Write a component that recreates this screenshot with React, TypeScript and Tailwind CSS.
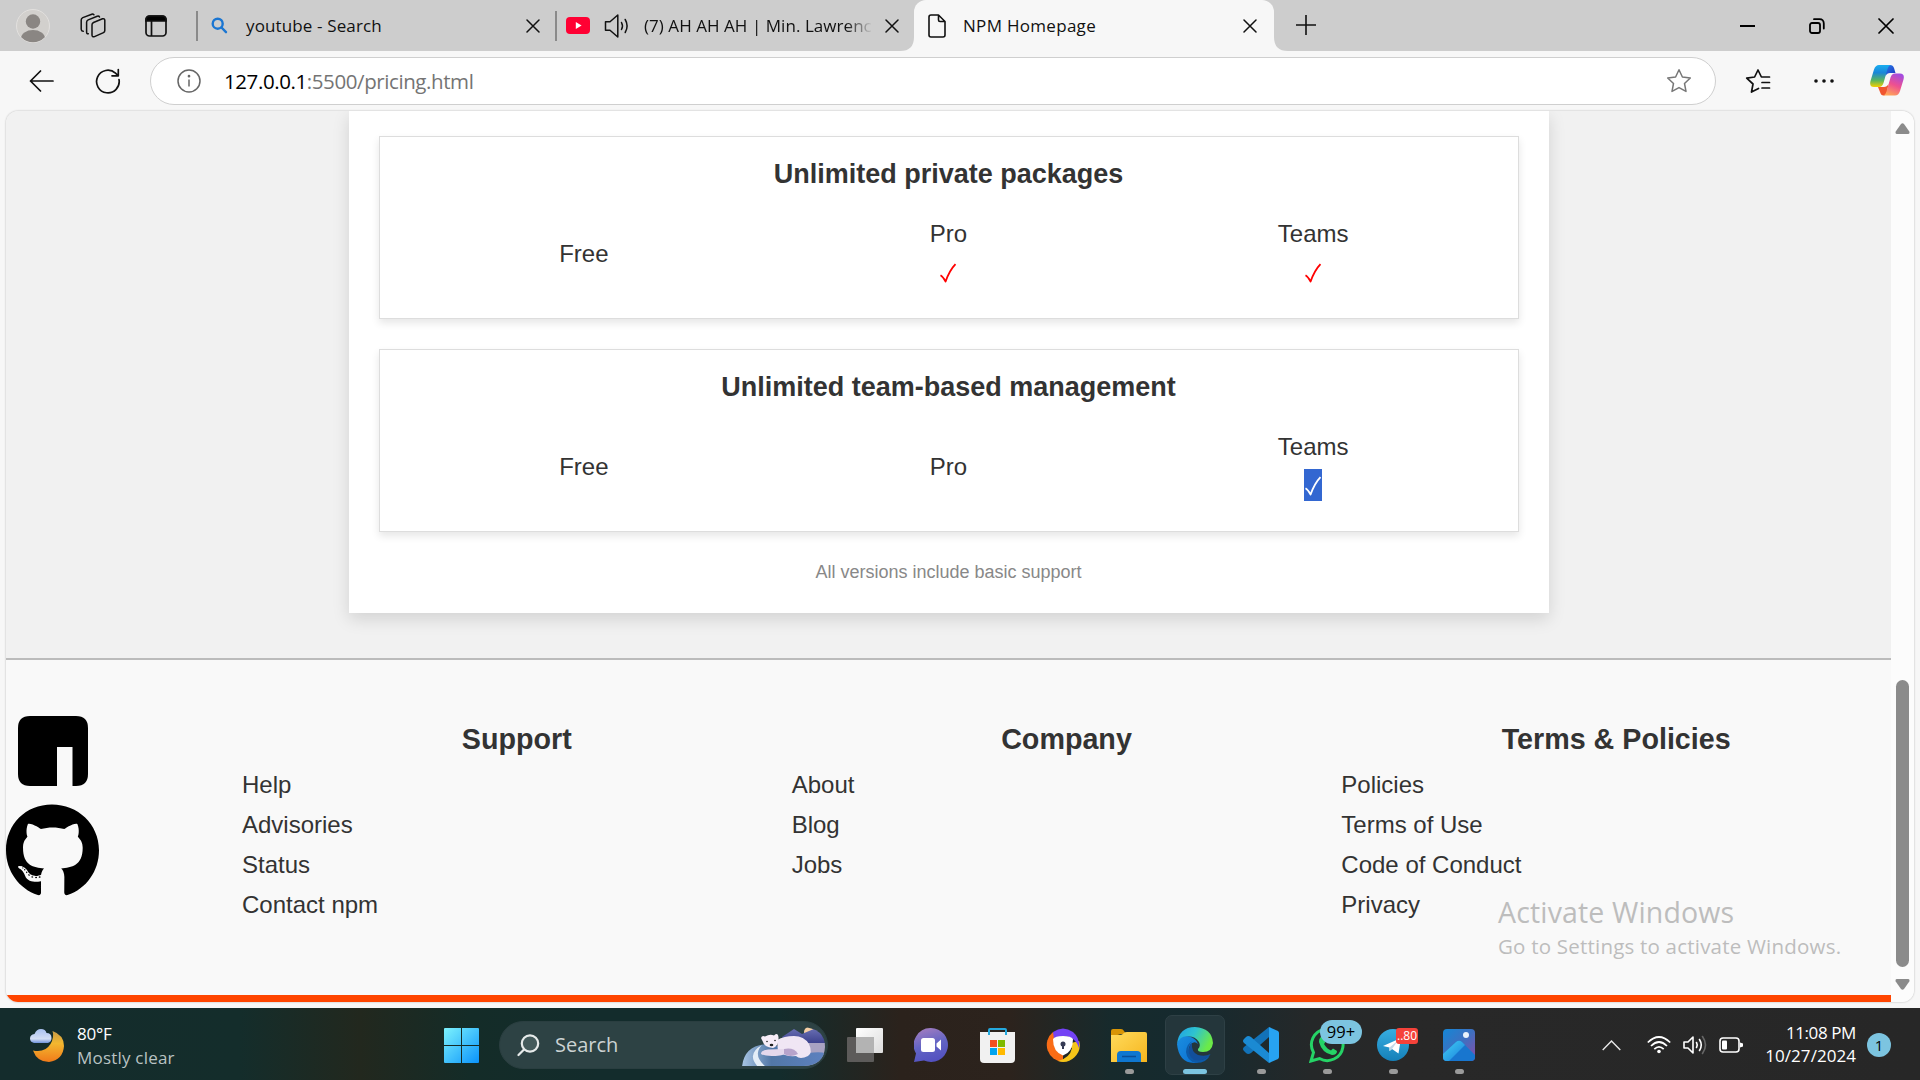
import type { ReactNode } from "react";
import { FaGithub } from "react-icons/fa";

const UI = "font-['Open_Sans','Noto_Sans',sans-serif]";

function CloseIcon({ className = "" }: { className?: string }) {
  return (
    <svg width="14" height="14" viewBox="0 0 14 14" className={className} fill="none" stroke="#111" strokeWidth="1.5" strokeLinecap="round">
      <path d="M1 1l12 12M13 1L1 13" />
    </svg>
  );
}

function TabStrip() {
  return (
    <div className={`flex h-[51px] w-full shrink-0 items-center bg-[#cdcdcd] text-[18px] text-[#111] ${UI}`}>
      <svg width="34" height="34" viewBox="0 0 34 34" className="ml-4 shrink-0">
        <defs>
          <clipPath id="avatar">
            <circle cx="17" cy="17" r="16.2" />
          </clipPath>
        </defs>
        <circle cx="17" cy="17" r="16.5" fill="#d2d0cd" stroke="#e2e0de" strokeWidth="1" />
        <circle cx="17" cy="12.5" r="7.2" fill="#8a8683" />
        <ellipse cx="17" cy="29.5" rx="12" ry="8.5" fill="#8a8683" clipPath="url(#avatar)" />
      </svg>
      <svg width="26" height="26" viewBox="0 0 26 26" className="ml-[30px] shrink-0" fill="none" stroke="#111" strokeWidth="1.5" strokeLinejoin="round" strokeLinecap="round">
        <path d="M13.5 9.5 L22.5 5.8 Q24.5 5.2 24.8 7.2 V17.5 Q24.8 19 23.5 19.6 L14.5 23.6 Q12.2 24.3 12 22.2 V11.8 Q12 10.2 13.5 9.5Z" />
        <path d="M8.3 20.8 Q6.6 21 6.6 19 V9.3 Q6.6 7.6 8.2 6.9 L17.2 3.2 Q19 2.8 19.5 4" />
        <path d="M3.2 18.3 Q1.2 18 1.2 16.2 V6.9 Q1.2 5.3 2.8 4.6 L11.8 1.2 Q13 .8 13.9 1.8" />
      </svg>
      <svg width="22" height="22" viewBox="0 0 22 22" className="ml-[39px] shrink-0" fill="none" stroke="#111" strokeWidth="1.7">
        <rect x="1" y="1" width="20" height="20" rx="3.5" />
        <path d="M1 5 Q1 1 5 1 H17 Q21 1 21 5 V6 H1Z" fill="#000" />
        <path d="M6.5 6V21" />
      </svg>
      <div className="ml-[29px] h-[30px] w-[2px] shrink-0 bg-[#8a8a8a]" />
      <svg width="17" height="17" viewBox="0 0 17 17" className="ml-[13px] shrink-0" fill="none" stroke="#1b76d2" strokeWidth="2.4" strokeLinecap="round">
        <circle cx="6.7" cy="6.7" r="5" />
        <path d="M10.5 10.5L15 15.2" />
      </svg>
      <span className="ml-[18px] w-[280px] whitespace-nowrap text-[17px] tracking-[0.13px]">youtube - Search</span>
      <CloseIcon className="shrink-0" />
      <div className="ml-[15px] h-[30px] w-[2px] shrink-0 bg-[#8a8a8a]" />
      <svg width="24" height="17" viewBox="0 0 24 17" className="ml-[9px] shrink-0">
        <rect width="24" height="17" rx="4" fill="#ff0033" />
        <path d="M9.8 5v7l5.8-3.500z" fill="#fff" />
      </svg>
      <svg width="26" height="24" viewBox="0 0 26 24" className="ml-[14px] shrink-0" fill="none" stroke="#111" strokeWidth="1.5" strokeLinejoin="round" strokeLinecap="round">
        <path d="M1.500 7.800H6L13.800 1V23L6 16.200H1.500Z" />
        <path d="M17.500 8.500Q19.500 12 17.500 15.500M21.200 5.500Q25 12 21.200 18.500" />
      </svg>
      <span className="ml-[14px] w-[229px] whitespace-nowrap text-[17px] tracking-[0.05px] [mask-image:linear-gradient(to_right,black_88%,transparent_100%)]">
        (7) AH AH AH | Min. Lawrenc
      </span>
      <CloseIcon className="ml-[12px] shrink-0" />
      <svg width="14" height="14" viewBox="0 0 14 14" className="ml-[1px] shrink-0 self-end">
        <path d="M14 0V14H0Q14 14 14 0Z" fill="#f7f7f7" />
      </svg>
      <div className="flex h-full w-[360px] shrink-0 items-center rounded-t-[12px] bg-[#f7f7f7]">
        <svg width="18" height="24" viewBox="0 0 18 24" className="ml-[14px] shrink-0" fill="none" stroke="#111" strokeWidth="1.6" strokeLinejoin="round">
          <path d="M3 1H10.500L17 7.500V21Q17 23 15 23H3Q1 23 1 21V3Q1 1 3 1ZM10.500 1V6Q10.500 7.500 12 7.500H17" />
        </svg>
        <span className="ml-[17px] w-[280px] whitespace-nowrap text-[17px] tracking-[0.3px]">NPM Homepage</span>
        <CloseIcon className="shrink-0" />
      </div>
      <svg width="14" height="14" viewBox="0 0 14 14" className="shrink-0 self-end">
        <path d="M0 0V14H14Q0 14 0 0Z" fill="#f7f7f7" />
      </svg>
      <svg width="20" height="20" viewBox="0 0 20 20" className="mb-px ml-[8px] shrink-0" stroke="#111" strokeWidth="1.600">
        <path d="M10 0V20M0 10H20" />
      </svg>
      <div className="ml-auto h-[2px] w-[15px] shrink-0 bg-black" />
      <svg width="16" height="16" viewBox="0 0 16 16" className="ml-[54px] shrink-0" fill="none" stroke="#000" strokeWidth="1.800" strokeLinecap="round">
        <rect x="1" y="5" width="10" height="10" rx="2" />
        <path d="M5 1.200H10.500Q14.800 1.200 14.800 5.500V10.500" />
      </svg>
      <svg width="16" height="16" viewBox="0 0 16 16" className="ml-[53px] mr-[26px] shrink-0" stroke="#000" strokeWidth="1.700" strokeLinecap="round">
        <path d="M1 1l14 14M15 1L1 15" />
      </svg>
    </div>
  );
}

function CopilotIcon() {
  return (
    <svg width="34" height="31" viewBox="0 0 34 31" className="shrink-0">
      <defs>
        <linearGradient id="cp1" x1="0" y1="0" x2="0" y2="1">
          <stop offset="0" stopColor="#19aef0" />
          <stop offset=".35" stopColor="#1a86d8" />
          <stop offset=".7" stopColor="#5ab55e" />
          <stop offset="1" stopColor="#f5d000" />
        </linearGradient>
        <linearGradient id="cp2" x1=".7" y1="0" x2=".3" y2="1">
          <stop offset="0" stopColor="#a34be0" />
          <stop offset=".5" stopColor="#ee5090" />
          <stop offset="1" stopColor="#ffa657" />
        </linearGradient>
        <linearGradient id="cp3" x1="0" y1="0" x2="1" y2="1">
          <stop offset="0" stopColor="#2a7be8" />
          <stop offset="1" stopColor="#1b35c0" />
        </linearGradient>
      </defs>
      <path d="M16 0H20Q23 0 24 3L25.500 8H20Q17 8 15.500 11Z" fill="url(#cp3)" />
      <path d="M8 22H14Q17 22 18.500 19L17 27Q16 30.500 13.500 30.500Q11 30.500 10 27Z" fill="#f0552f" />
      <path d="M9 0H21Q18.500 .5 17.500 4L13.500 18Q12.200 22 9 22H4Q-1 22 .5 16L4 4.500Q5.500 0 9 0Z" fill="url(#cp1)" />
      <path d="M25 30.500H13Q15.500 30 16.500 26.500L20.500 12.500Q21.800 8.500 25 8.500H30Q35 8.500 33.500 14.500L30 26Q28.500 30.500 25 30.500Z" fill="url(#cp2)" />
    </svg>
  );
}

function Toolbar() {
  return (
    <div className={`flex h-[59px] w-full shrink-0 items-center bg-[#f7f7f7] ${UI}`}>
      <svg width="25" height="22" viewBox="0 0 25 22" className="ml-[29px] shrink-0" fill="none" stroke="#111" strokeWidth="1.700" strokeLinecap="round" strokeLinejoin="round">
        <path d="M24 11H1.500M11.500 1L1.500 11L11.500 21" />
      </svg>
      <svg width="26" height="26" viewBox="0 0 26 26" className="ml-[41px] shrink-0" fill="none" stroke="#111" strokeWidth="1.700" strokeLinecap="round" strokeLinejoin="round">
        <path d="M24 11.500A11.300 11.300 0 1 1 20.500 5.200L23.300 7.800M23.300 1.500V7.800H17" />
      </svg>
      <div className="ml-[29px] flex h-[48px] w-[1566px] shrink-0 items-center rounded-full border border-[#cfcfcf] bg-white">
        <svg width="24" height="24" viewBox="0 0 24 24" className="ml-[26px] shrink-0" fill="none" stroke="#666" strokeWidth="1.500">
          <circle cx="12" cy="12" r="11" />
          <path d="M12 10.500V17.500" />
          <circle cx="12" cy="7.200" r=".6" fill="#666" />
        </svg>
        <span className="ml-[23px] mt-[2px] text-[20.500px] tracking-[-0.41px] text-[#747474]">
          <span className="text-black">127.0.0.1</span>:5500/pricing.html
        </span>
        <svg width="26" height="26" viewBox="0 0 26 26" className="ml-auto mr-[23px] shrink-0" fill="none" stroke="#777" strokeWidth="1.500" strokeLinejoin="round">
          <path d="M13 1.800L16.400 9L24.300 10L18.500 15.500L20 23.400L13 19.600L6 23.400L7.500 15.500L1.700 10L9.600 9Z" />
        </svg>
      </div>
      <svg width="26" height="26" viewBox="0 0 26 26" className="ml-[29px] shrink-0" fill="none" stroke="#111" strokeWidth="1.700" strokeLinejoin="round" strokeLinecap="round">
        <path d="M13.500 20.500L6.500 24L8 16L1.700 10.200L9.600 9L13 2L16.400 9H24.500M17 14.500H24.500M17 20H24.500" />
      </svg>
      <svg width="20" height="4" viewBox="0 0 20 4" className="ml-[43px] shrink-0" fill="#111">
        <circle cx="2" cy="2" r="1.800" />
        <circle cx="10" cy="2" r="1.800" />
        <circle cx="18" cy="2" r="1.800" />
      </svg>
      <div className="ml-[36px]">
        <CopilotIcon />
      </div>
    </div>
  );
}

function Check({ selected = false }: { selected?: boolean }) {
  return (
    <span className={`flex h-8 w-[18px] items-center justify-center ${selected ? "bg-[#3367d1]" : ""}`}>
      <svg width="18" height="32" viewBox="0 0 18 32" role="img" aria-label="included" fill="none" stroke={selected ? "#fff" : "#f00"} strokeLinejoin="round">
        <path d="M1.500 19.200Q4 20.500 6.600 25.500Q10.500 14.500 16.500 8.200" strokeWidth="1.800" />
      </svg>
    </span>
  );
}

function Plan({ name, mark }: { name: string; mark?: "on" | "selected" }) {
  return (
    <div className="flex flex-col items-center justify-center">
      <span className="h-10 leading-10">{name}</span>
      {mark && (
        <span className="flex h-10 items-start pt-[2px]">
          <Check selected={mark === "selected"} />
        </span>
      )}
    </div>
  );
}

function Card({ title, children }: { title: string; children: ReactNode }) {
  return (
    <section className="flex h-[183px] shrink-0 flex-col border border-[#ddd] bg-white px-[22px] pt-[15px] shadow-[0_4px_8px_rgba(0,0,0,0.1)]">
      <h3 className="h-[44px] text-center text-[27px] font-bold leading-[44px]">{title}</h3>
      <div className="mt-[18px] grid h-20 grid-cols-3 text-[24px]">{children}</div>
    </section>
  );
}

function FooterColumn({ title, items }: { title: string; items: string[] }) {
  return (
    <div className="flex-1">
      <h3 className="h-[49px] text-center text-[28.700px] font-bold leading-[46px]">{title}</h3>
      <ul className="text-[24px] leading-10">
        {items.map((t) => (
          <li key={t}>{t}</li>
        ))}
      </ul>
    </div>
  );
}

function Page() {
  return (
    <div className="relative flex w-[1885px] shrink-0 flex-col bg-[#f1f1f1] font-['Liberation_Sans',Arial,sans-serif] text-[#333]">
      <main className="flex h-[547px] shrink-0 flex-col items-center">
        <div className="flex h-[502px] w-[1200px] flex-col gap-[30px] bg-white px-[30px] pt-[25px] shadow-[0_6px_16px_rgba(0,0,0,0.13)]">
          <Card title="Unlimited private packages">
            <Plan name="Free" />
            <Plan name="Pro" mark="on" />
            <Plan name="Teams" mark="on" />
          </Card>
          <Card title="Unlimited team-based management">
            <Plan name="Free" />
            <Plan name="Pro" />
            <Plan name="Teams" mark="selected" />
          </Card>
          <p className="-mt-[5px] text-center text-[18px] leading-[30px] text-[#888]">All versions include basic support</p>
        </div>
      </main>
      <footer className="flex min-h-0 flex-1 border-b-[7px] border-t-2 border-b-[#ff4500] border-t-[#bbb] bg-[#f9f9f9]">
        <div className="flex w-[236px] shrink-0 flex-col pt-[56px]">
          <svg width="70" height="70" viewBox="0 0 70 70" className="ml-[12px]">
            <path d="M12 0H58Q70 0 70 12V58Q70 70 58 70H54.500V31H39V70H12Q0 70 0 58V12Q0 0 12 0Z" fill="#000" />
          </svg>
          <FaGithub className="mt-[17px] h-[96px] w-[93px] text-black" />
        </div>
        <div className="flex flex-1 pt-[56px]">
          <FooterColumn title="Support" items={["Help", "Advisories", "Status", "Contact npm"]} />
          <FooterColumn title="Company" items={["About", "Blog", "Jobs"]} />
          <FooterColumn title="Terms & Policies" items={["Policies", "Terms of Use", "Code of Conduct", "Privacy"]} />
        </div>
      </footer>
      <div className={`absolute left-[1492px] top-[782px] whitespace-nowrap text-[#bdbdbd] ${UI}`}>
        <div className="h-[40px] text-[28.500px] leading-[38px] tracking-[0.15px]">Activate Windows</div>
        <div className="text-[20.500px] leading-[27px] tracking-[0.21px]">Go to Settings to activate Windows.</div>
      </div>
    </div>
  );
}

function Scrollbar() {
  return (
    <div className="flex flex-1 flex-col items-center bg-[#fcfcfc]">
      <svg width="15" height="11" viewBox="0 0 15 11" className="mt-[12px]">
        <path d="M6 1Q7.500-.6 9 1L14.300 8.500Q15 11 13 11H2Q0 11 .7 8.500Z" fill="#8b8b8b" />
      </svg>
      <div className="mt-[546px] h-[287px] w-[13px] rounded-full bg-[#8b8b8b]" />
      <svg width="15" height="11" viewBox="0 0 15 11" className="mt-[12px]">
        <path d="M6 10Q7.500 11.600 9 10L14.300 2.500Q15 0 13 0H2Q0 0 .7 2.500Z" fill="#8b8b8b" />
      </svg>
    </div>
  );
}

function TaskIcon({ children, mark }: { children: ReactNode; mark?: boolean }) {
  return (
    <div className="relative flex h-[60px] w-[66px] shrink-0 items-center justify-center">
      {children}
      {mark && <span className="absolute bottom-[1px] left-[28.500px] h-[5px] w-[9px] rounded-full bg-[#9a9a9a]" />}
    </div>
  );
}

function Weather() {
  return (
    <svg width="34" height="34" viewBox="0 0 34 34" className="shrink-0">
      <defs>
        <linearGradient id="moon" x1="0" y1="0" x2="0" y2="1">
          <stop offset="0" stopColor="#c89b48" />
          <stop offset=".4" stopColor="#f3b72f" />
          <stop offset="1" stopColor="#f07a1a" />
        </linearGradient>
        <linearGradient id="cloud" x1="0" y1="0" x2="0" y2="1">
          <stop offset="0" stopColor="#a9c0f0" />
          <stop offset=".7" stopColor="#d4def4" />
          <stop offset="1" stopColor="#6f93dc" />
        </linearGradient>
      </defs>
      <path d="M22.500 3Q34 7 34 18Q33 32 19 34Q7 34 3 22.500Q15 25 20.500 16Q24.500 9 22.500 3Z" fill="url(#moon)" />
      <path d="M4 15Q0 14 0 10.500Q0 6.500 4.500 6Q6.500 1 11 1Q15.500 1 16.500 5Q21.500 5 21.500 10Q21.500 14 18 15Z" fill="url(#cloud)" />
    </svg>
  );
}

function PolarBear() {
  return (
    <svg width="84" height="40" viewBox="0 0 84 40" className="shrink-0">
      <defs>
        <linearGradient id="lake" x1="0" y1="0" x2="1" y2="0">
          <stop offset="0" stopColor="#a8c5e4" />
          <stop offset=".35" stopColor="#5277a7" />
          <stop offset="1" stopColor="#5d81c0" />
        </linearGradient>
        <linearGradient id="hills" x1="0" y1="0" x2="0" y2="1">
          <stop offset="0" stopColor="#6a70b4" />
          <stop offset="1" stopColor="#3a3f8c" />
        </linearGradient>
        <clipPath id="pill">
          <path d="M0 0H60Q83 1 83 20Q82 38 62 39H0Z" />
        </clipPath>
      </defs>
      <g clipPath="url(#pill)">
        <circle cx="67" cy="5" r="5" fill="#f6cfa6" />
        <path d="M40 10L52 2L60 7L74 1L84 9V17H44Z" fill="url(#hills)" />
        <path d="M60 16H84V40H52Z" fill="#a8a2c2" />
        <path d="M0 40Q2 18 26 17L66 26Q84 24 84 28L80 40Z" fill="url(#lake)" />
        <path d="M16 40Q4 27 20 18Q10 28 24 40Z" fill="#e3edf7" />
        <path d="M35 13Q42 9 52 9Q62 9 67 17Q71 26 66 29Q58 33 54 29Q44 30 36 25Z" fill="#f0e6f4" />
        <path d="M19 27Q19 23 26 22.500L42 22Q46 27 38 28.500Q24 30 19 27Z" fill="#e5d8ec" />
        <path d="M42 22Q52 20 56 27Q48 31 42 27Z" fill="#b7a3cb" />
        <path d="M19 11Q20 8 23 9.500Q28 6.500 32 8.500Q36 5 36.500 10Q37 19 31 21Q22 20 21 15Z" fill="#f7edf8" />
        <circle cx="25" cy="14.500" r=".8" fill="#222" />
        <circle cx="33" cy="13.500" r=".8" fill="#222" />
        <ellipse cx="29.500" cy="18" rx="1.800" ry="1.200" fill="#222" />
      </g>
    </svg>
  );
}

function Taskbar() {
  return (
    <div
      className={`flex h-[72px] w-full shrink-0 items-center bg-[linear-gradient(90deg,#142c2c_0px,#142d2b_240px,#22281e_360px,#142c28_470px,#132c2c_600px,#132c2c_780px,#2b221c_900px,#2c231d_1010px,#172a2c_1110px,#152a2f_1190px,#252829_1310px,#282828_1400px,#272727_1920px)] pt-[2px] text-white ${UI}`}
    >
      <div className="flex w-[414px] shrink-0 items-center pl-[30px]">
        <Weather />
        <div className="ml-[13px] pt-px text-[17px] leading-6">
          <div className="tracking-[-0.2px]">80°F</div>
          <div className="tracking-[0.2px] text-[#b9c3c3]">Mostly clear</div>
        </div>
      </div>
      <div className="flex w-[85px] shrink-0 pl-[30px]">
        <svg width="35" height="35" viewBox="0 0 35 35">
          <defs>
            <linearGradient id="win" x1="0" y1="0" x2="1" y2="1">
              <stop offset="0" stopColor="#7df3fd" />
              <stop offset="1" stopColor="#0a93fb" />
            </linearGradient>
          </defs>
          <path d="M1 0H17V17H0V1Q0 0 1 0ZM18 0H34Q35 0 35 1V17H18ZM0 18H17V35H1Q0 35 0 34ZM18 18H35V34Q35 35 34 35H18Z" fill="url(#win)" />
        </svg>
      </div>
      <div className="flex h-[48px] w-[329px] shrink-0 items-center rounded-full border border-[#2a3e40] bg-[#2d4244]">
        <svg width="23" height="23" viewBox="0 0 23 23" className="ml-[17px] shrink-0" fill="none" stroke="#e6eaea" strokeWidth="2.200" strokeLinecap="round">
          <circle cx="13" cy="9.500" r="8.200" fill="#445a5b" />
          <path d="M7 15.500L1.500 21" />
        </svg>
        <span className="ml-[15px] text-[20px] text-[#ccd3d3]">Search</span>
        <div className="ml-auto mr-px mt-[3px]">
          <PolarBear />
        </div>
      </div>
      <div className="ml-[4px] flex">
        <TaskIcon>
          <svg width="36" height="34" viewBox="0 0 36 34">
            <defs>
              <linearGradient id="tv" x1="0" y1="0" x2="1" y2="1">
                <stop offset="0" stopColor="#fff" />
                <stop offset="1" stopColor="#dcdcdc" />
              </linearGradient>
            </defs>
            <rect x="9" y="0" width="27" height="25" rx="1" fill="url(#tv)" />
            <rect x="0" y="9" width="27" height="25" rx="1" fill="#5d5b5a" />
            <rect x="9" y="9" width="18" height="16" fill="#b3b3b3" />
          </svg>
        </TaskIcon>
        <TaskIcon>
          <svg width="34" height="34" viewBox="0 0 34 34">
            <defs>
              <linearGradient id="chat" x1=".3" y1="0" x2=".6" y2="1">
                <stop offset="0" stopColor="#a07cc0" />
                <stop offset=".5" stopColor="#6264c4" />
                <stop offset="1" stopColor="#5250c0" />
              </linearGradient>
            </defs>
            <path d="M17 0A17 17 0 1 1 10 32.500L0 34L2 25.500A17 17 0 0 1 17 0Z" fill="url(#chat)" />
            <rect x="7" y="10" width="14" height="14" rx="2.500" fill="#fff" />
            <path d="M22.500 15.500L27 11.500V22.500L22.500 18.500Z" fill="#fff" />
          </svg>
        </TaskIcon>
        <TaskIcon>
          <svg width="35" height="35" viewBox="0 0 35 35">
            <path d="M9 6V2Q9 1 10 1H25Q26 1 26 2V6" fill="none" stroke="#25a9de" strokeWidth="2" />
            <path d="M0 4H35V31Q35 35 31 35H4Q0 35 0 31Z" fill="#f1f1f1" />
            <path d="M9 4V7M26 4V7" stroke="#25a9de" strokeWidth="2" />
            <rect x="10" y="12" width="7" height="7" fill="#f25022" />
            <rect x="18" y="12" width="7" height="7" fill="#7fba00" />
            <rect x="10" y="20" width="7" height="7" fill="#00a4ef" />
            <rect x="18" y="20" width="7" height="7" fill="#ffb900" />
          </svg>
        </TaskIcon>
        <TaskIcon>
          <svg width="34" height="34" viewBox="0 0 34 34">
            <path d="M17 17L7 4A16.700 16.700 0 0 0 17 33.700Z" fill="#f96c16" />
            <path d="M17 17L33.200 13A16.700 16.700 0 0 1 12 33Q24 30 26 20Z" fill="#f5c518" />
            <path d="M7 4Q17-3 27 4Q34 10 33 20Q29 8 17 8L8 11Z" fill="#7342f5" />
            <path d="M17 8Q25 8 27 11Q27 24 17 27.500Q7 24 7 11Q9 8 17 8Z" fill="#fff" />
            <circle cx="17" cy="16" r="2.500" fill="#363b54" />
            <path d="M16 17H18V21H16Z" fill="#363b54" />
          </svg>
        </TaskIcon>
        <TaskIcon mark>
          <svg width="36" height="33" viewBox="0 0 36 33">
            <defs>
              <linearGradient id="fold" x1="0" y1="0" x2="1" y2="1">
                <stop offset="0" stopColor="#ffdb5c" />
                <stop offset="1" stopColor="#f6b51e" />
              </linearGradient>
            </defs>
            <path d="M0 2Q0 0 2 0H10Q12 0 13 2L15 5H10L0 8Z" fill="#d89506" />
            <path d="M0 6H9Q11 6 13 4Q14 3 16 3H34Q36 3 36 5V33H0Z" fill="url(#fold)" />
            <path d="M6 33V26Q6 22 10 22H26Q30 22 30 26V33Z" fill="#0f77d0" />
            <path d="M11 27.500H25" stroke="#0a4e97" strokeWidth="1.500" />
          </svg>
        </TaskIcon>
        <div className="relative -mx-px flex w-[68px] items-center justify-center">
          <div className="flex h-[60px] w-[60px] items-center justify-center rounded-[7px] border border-[#2e4045] bg-[#24363b]">
            <svg width="36" height="36" viewBox="0 0 36 36">
              <defs>
                <linearGradient id="eg1" x1="0" y1="0" x2="1" y2=".4">
                  <stop offset="0" stopColor="#1e9ee8" />
                  <stop offset=".5" stopColor="#2fc3cf" />
                  <stop offset="1" stopColor="#6bea48" />
                </linearGradient>
                <linearGradient id="eg2" x1="0" y1="0" x2="1" y2="1">
                  <stop offset="0" stopColor="#1b8ee0" />
                  <stop offset="1" stopColor="#0a6fd0" />
                </linearGradient>
              </defs>
              <path d="M0 17Q2 0 18 0Q35 1 36 16Q35 25 26 25Q20 25 21 22Q24 19 22 15Q17 8 8 10Q2 12 0 17Z" fill="url(#eg1)" />
              <path d="M0 17Q3 8 12 9.500Q19 11 21 17Q17 13 13 18Q9 26 16 32Q18 35 21 35.800Q2 38 0 17Z" fill="url(#eg2)" />
              <path d="M16 14Q10 18 12 25Q16 33 23 33Q30 32 33.500 27Q30 36 19 36Q10 34 9 25Q9 17 16 14Z" fill="#0d5aa8" />
              <path d="M13 18Q9 27 17 33Q28 35 33.500 27Q28 30 21 28Q14 25 15 16Z" fill="#124f9b" />
            </svg>
          </div>
          <span className="absolute bottom-[1px] left-[22px] h-[5px] w-[24px] rounded-full bg-[#7cc4e0]" />
        </div>
        <TaskIcon mark>
          <svg width="36" height="36" viewBox="0 0 36 36">
            <path d="M26 0V10L8 26Q5 28 3 26L1 24Q-1 22 1 20Z" fill="#1272b8" />
            <path d="M26 36V26L8 10Q5 8 3 10L1 12Q-1 14 1 16Z" fill="#1b8ad3" />
            <path d="M26 0L35 4Q36 5 36 6V30Q36 31 35 32L26 36Z" fill="#27a3f2" />
          </svg>
        </TaskIcon>
        <TaskIcon mark>
          <svg width="36" height="36" viewBox="0 0 36 36">
            <path d="M2 34L4.500 25.500A15.800 15.800 0 1 1 10.500 31.500Z" fill="none" stroke="#25d366" strokeWidth="3" />
            <path d="M11 11Q13 8 15 11L16.500 14.500Q16 16 15 17Q18 22 22 23.500L24 21.500L28 24Q28 28 23 28Q13 26 10 15Q10 12 11 11Z" fill="#25d366" />
          </svg>
          <span className="absolute left-[26px] top-[5px] flex h-[24px] w-[42px] items-center justify-center rounded-full bg-[#7cc4e0] text-[16.500px] leading-none text-black">99+</span>
        </TaskIcon>
        <TaskIcon mark>
          <svg width="32" height="32" viewBox="0 0 32 32">
            <defs>
              <linearGradient id="tg" x1="0" y1="0" x2="0" y2="1">
                <stop offset="0" stopColor="#37aee2" />
                <stop offset="1" stopColor="#1580b8" />
              </linearGradient>
            </defs>
            <circle cx="16" cy="16" r="16" fill="url(#tg)" />
            <path d="M6 17L24 9L21.500 24.500L15 20L12.500 22V18.500Z" fill="#fff" />
            <path d="M12.500 18.500L21 11.500L15 20L12.500 22Z" fill="#c3d9e8" />
          </svg>
          <span className="absolute left-[36px] top-[13px] flex h-[16px] w-[22px] items-center justify-center rounded-[3px] bg-[#f5423a] text-[12px] leading-none">..80</span>
        </TaskIcon>
        <TaskIcon mark>
          <svg width="32" height="32" viewBox="0 0 32 32">
            <defs>
              <linearGradient id="ph" x1="0" y1="0" x2="1" y2="1">
                <stop offset="0" stopColor="#1487d6" />
                <stop offset=".5" stopColor="#3f6fc0" />
                <stop offset="1" stopColor="#8a4ba8" />
              </linearGradient>
              <linearGradient id="mt" x1="0" y1="0" x2="1" y2="1">
                <stop offset="0" stopColor="#41d0f5" />
                <stop offset="1" stopColor="#1a7edb" />
              </linearGradient>
              <clipPath id="phc">
                <rect width="32" height="32" rx="4" />
              </clipPath>
            </defs>
            <g clipPath="url(#phc)">
              <rect width="32" height="32" fill="url(#ph)" />
              <path d="M0 27L13 13Q16 10.500 19 13L32 26V32H0Z" fill="#1876cf" />
              <path d="M0 25L13 13Q16 10.500 19 13L22 16L6 32H0Z" fill="url(#mt)" />
              <circle cx="23" cy="6" r="3" fill="#e9f2fb" />
            </g>
          </svg>
        </TaskIcon>
      </div>
      <svg width="19" height="11" viewBox="0 0 19 11" className="ml-auto shrink-0" fill="none" stroke="#e8e8e8" strokeWidth="1.400">
        <path d="M.7 10L9.500 1L18.300 10" />
      </svg>
      <svg width="24" height="18" viewBox="0 0 24 18" className="ml-[26px] shrink-0" fill="none" stroke="#fff" strokeWidth="1.700">
        <path d="M.8 6.500Q12-4.500 23.200 6.500M4 10Q12 2 20 10M7.300 13.200Q12 8.500 16.700 13.200" />
        <circle cx="12" cy="15.500" r="1.800" fill="#fff" stroke="none" />
      </svg>
      <svg width="24" height="20" viewBox="0 0 24 20" className="ml-[12px] shrink-0" fill="none" stroke="#fff" strokeWidth="1.600" strokeLinejoin="round" strokeLinecap="round">
        <path d="M1 7H5L10 2V18L5 13H1Z" />
        <path d="M13.500 7.500Q15 10 13.500 12.500M16.500 4.500Q20 10 16.500 15.500" />
        <path d="M19.500 1.500Q25.500 10 19.500 18.500" stroke="#666" />
      </svg>
      <svg width="25" height="16" viewBox="0 0 25 16" className="ml-[12px] shrink-0">
        <rect x="1" y="1" width="19" height="14" rx="3" fill="none" stroke="#fff" strokeWidth="1.600" />
        <rect x="3" y="3.500" width="5" height="9" rx="1" fill="#fff" />
        <path d="M21 5.500L24 6.500V9.500L21 10.500Z" fill="#fff" />
      </svg>
      <div className="ml-[12px] w-[100px] whitespace-nowrap pb-[2px] text-right text-[17px] leading-[23px]">
        <div className="tracking-[-0.4px]">11:08 PM</div>
        <div className="tracking-[0.05px]">10/27/2024</div>
      </div>
      <div className="ml-[11px] mr-[29px] flex h-[24px] w-[24px] shrink-0 items-center justify-center rounded-full bg-[#7cc4e0] text-[15px] leading-none text-black">1</div>
    </div>
  );
}

export default function App() {
  return (
    <div className="flex h-[1080px] w-[1920px] flex-col overflow-hidden bg-[#f7f7f7]">
      <TabStrip />
      <Toolbar />
      <div className="mb-[6px] ml-[6px] mr-[6px] mt-px flex min-h-0 flex-1 overflow-hidden rounded-[12px] shadow-[0_0_2px_rgba(0,0,0,0.3)]">
        <Page />
        <Scrollbar />
      </div>
      <Taskbar />
    </div>
  );
}
